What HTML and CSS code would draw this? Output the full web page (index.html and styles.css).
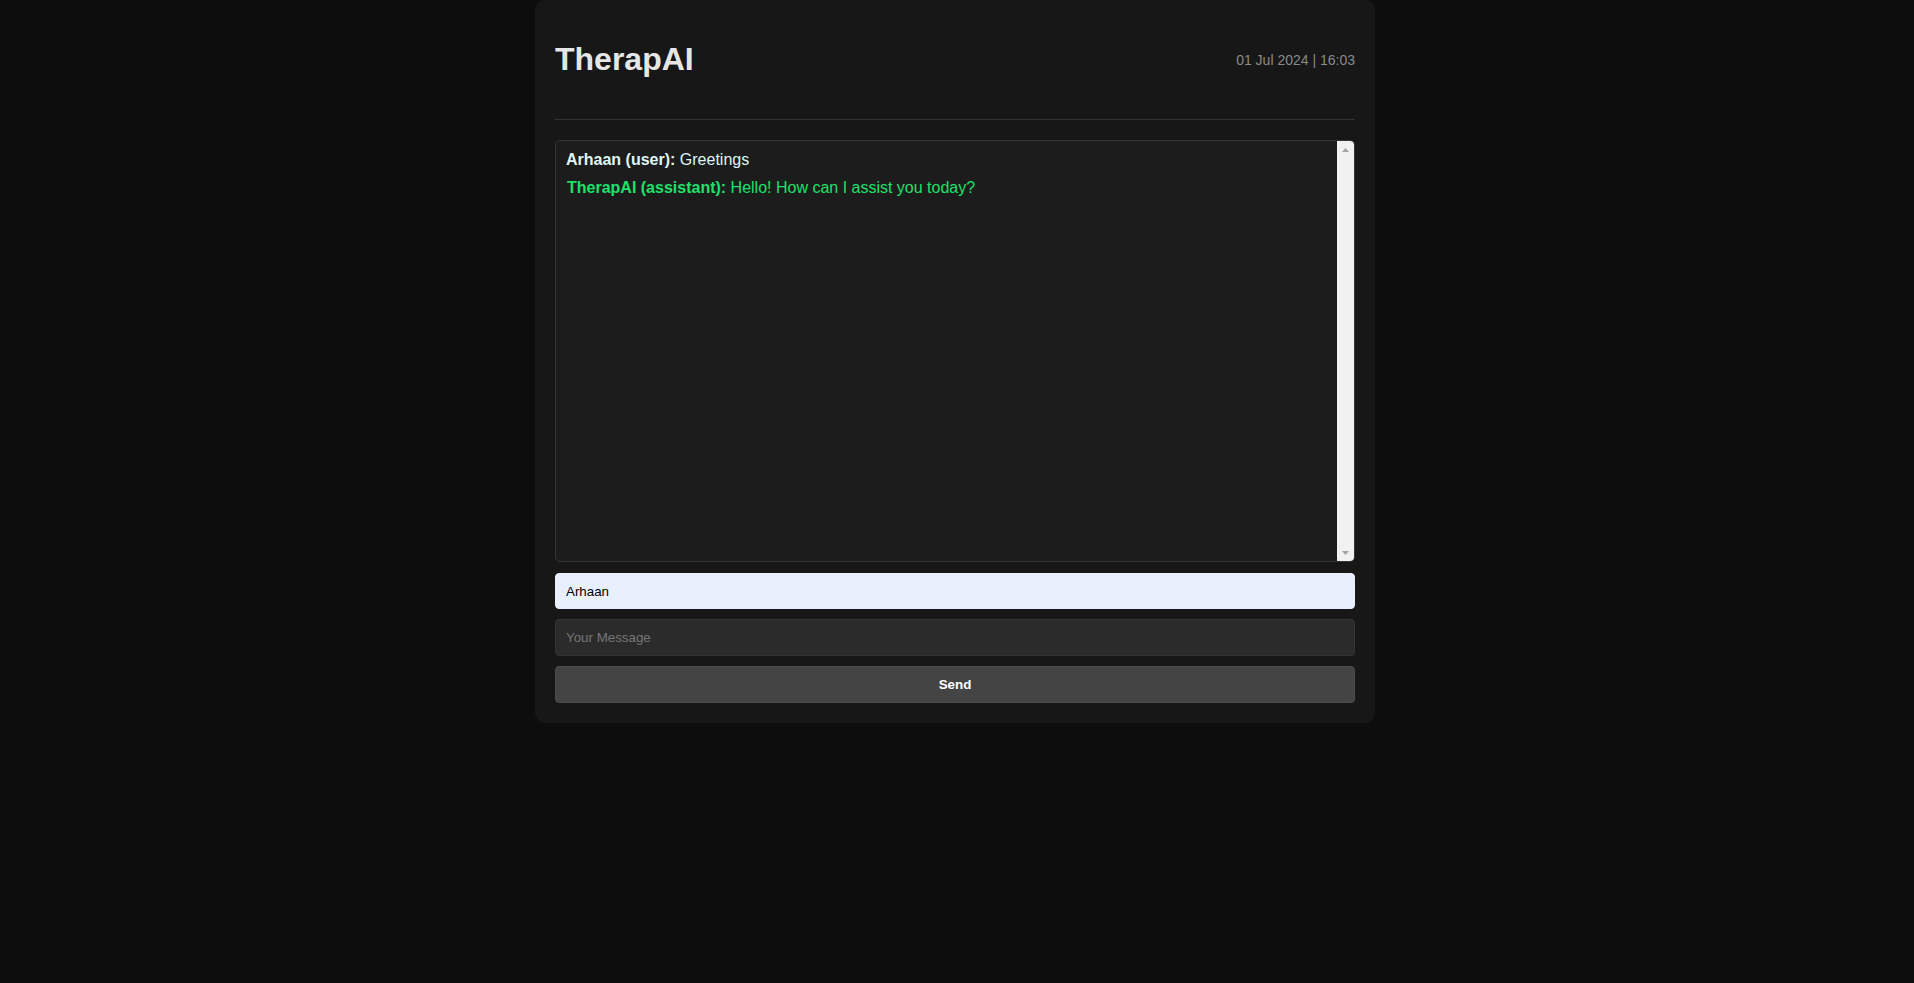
FILE: index.html
```html
<!DOCTYPE html>
<html lang="en">
<head>
<meta charset="utf-8">
<title>TherapAI</title>
<link rel="stylesheet" href="styles.css">
</head>
<body>
<div class="app">
  <header class="header">
    <h1 class="title">TherapAI</h1>
    <div class="date">01 Jul 2024 | 16:03</div>
  </header>
  <hr class="divider">
  <div class="chat">
    <div class="chat-log">
      <div class="msg msg-user"><strong>Arhaan (user):</strong> Greetings</div>
      <div class="msg msg-assistant"><strong>TherapAI (assistant):</strong> Hello! How can I assist you today?</div>
    </div>
    <div class="scrollbar">
      <div class="sb-btn"><svg width="7" height="4" viewBox="0 0 7 4"><path d="M3.5 0 L7 4 L0 4 Z" fill="#a3a3a3"/></svg></div>
      <div class="sb-track"></div>
      <div class="sb-btn"><svg width="7" height="4" viewBox="0 0 7 4"><path d="M0 0 L7 0 L3.5 4 Z" fill="#a3a3a3"/></svg></div>
    </div>
  </div>
  <input class="field field-name" type="text" value="Arhaan">
  <input class="field field-msg" type="text" placeholder="Your Message">
  <button class="send">Send</button>
</div>
</body>
</html>
```

FILE: styles.css
```css
html, body {
  margin: 0;
  padding: 0;
  background: #0d0d0d;
  font-family: "Liberation Sans", Arial, sans-serif;
}
body {
  padding-right: 4px;
}
.app {
  width: 840px;
  box-sizing: border-box;
  margin: 0 auto;
  padding: 20px;
  background: #171717;
  border-radius: 10px;
  display: flex;
  flex-direction: column;
}
.header {
  display: flex;
  justify-content: space-between;
  align-items: center;
  padding-top: 21px;
}
.title {
  margin: 0;
  font-size: 32px;
  font-weight: bold;
  color: #e6e6e6;
  line-height: 37px;
}
.date {
  font-size: 14px;
  color: #8a8a8a;
}
.divider {
  margin: 41px 0 20px 0;
  border: 0;
  border-top: 1px solid #333333;
  height: 0;
}
.chat {
  height: 422px;
  box-sizing: border-box;
  border: 1px solid #353535;
  border-radius: 5px;
  background: #1c1c1c;
  display: flex;
  overflow: hidden;
}
.chat-log {
  flex: 1;
  padding: 10px;
  font-size: 16px;
}
.msg {
  margin-bottom: 10px;
  line-height: 18px;
}
.msg-user {
  color: #dff6f4;
}
.msg-assistant {
  color: #1fe06a;
  padding-left: 1px;
}
.scrollbar {
  width: 17px;
  background: #f1f1f1;
  display: flex;
  flex-direction: column;
}
.sb-btn {
  height: 17px;
  display: flex;
  align-items: center;
  justify-content: center;
}
.sb-track {
  flex: 1;
}
.field {
  height: 37px;
  box-sizing: border-box;
  margin-top: 10px;
  padding: 0 10px;
  font-family: "Liberation Sans", Arial, sans-serif;
  font-size: 13.333px;
  border-radius: 4px;
  outline: none;
}
.field-name {
  height: 36px;
  margin-top: 11px;
  background: #e8f0fe;
  border: 1px solid #e8f0fe;
  color: #000000;
}
.field-msg {
  background: #2b2b2b;
  border: 1px solid #333333;
  color: #dddddd;
}
.field-msg::placeholder {
  color: #767676;
}
.send {
  height: 37px;
  margin-top: 10px;
  box-sizing: border-box;
  background: #444444;
  border: 1px solid #4c4c4c;
  border-radius: 4px;
  color: #ffffff;
  font-family: "Liberation Sans", Arial, sans-serif;
  font-size: 13.333px;
  font-weight: bold;
  cursor: pointer;
}
```
